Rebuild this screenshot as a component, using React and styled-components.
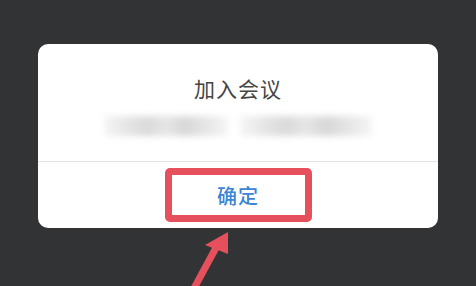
import React from "react";
import styled, { createGlobalStyle } from "styled-components";

const GlobalStyle = createGlobalStyle`
  html, body {
    margin: 0;
    padding: 0;
    background: #323335;
  }
  body {
    font-family: "Noto Sans CJK SC", "Noto Sans", sans-serif;
  }
`;

const Page = styled.div`
  position: relative;
  width: 476px;
  height: 286px;
  overflow: hidden;
  padding-top: 44px;
  box-sizing: border-box;
`;

const Dialog = styled.div`
  width: 400px;
  height: 184px;
  margin: 0 auto;
  background: #fff;
  border-radius: 10px;
  display: flex;
  flex-direction: column;
  overflow: hidden;
`;

const Body = styled.div`
  height: 118px;
  display: flex;
  flex-direction: column;
  align-items: center;
  box-sizing: border-box;
  padding-top: 30px;
  border-bottom: 1.5px solid #e3e3e5;
`;

const Title = styled.div`
  font-size: 21px;
  line-height: 28px;
  color: #454545;
  letter-spacing: 1px;
`;

const Blurred = styled.div`
  margin-top: 14px;
  display: flex;
  gap: 12px;
  filter: blur(3px);
`;

const Smudge = styled.div`
  width: ${(p) => p.w}px;
  height: 20px;
  background: linear-gradient(
    90deg,
    #f6f6f6 0%,
    #e6e6e6 18%,
    #dadada 35%,
    #e6e6e6 50%,
    #d8d8d8 65%,
    #e8e8e8 85%,
    #f6f6f6 100%
  );
`;

const Footer = styled.div`
  flex: 1;
  display: flex;
  justify-content: center;
  padding-top: 6px;
`;

const Confirm = styled.div`
  width: 147px;
  height: 54px;
  box-sizing: border-box;
  border: 7px solid #e6505c;
  border-radius: 5px;
  display: flex;
  align-items: center;
  justify-content: center;
  font-size: 20px;
  font-weight: 500;
  color: #3a85d5;
  letter-spacing: 1px;
`;

const Arrow = styled.svg`
  position: absolute;
  left: 0;
  top: 0;
`;

export default function App() {
  return (
    <>
      <GlobalStyle />
      <Page>
        <Dialog>
          <Body>
            <Title>加入会议</Title>
            <Blurred>
              <Smudge w={124} />
              <Smudge w={132} />
            </Blurred>
          </Body>
          <Footer>
            <Confirm>确定</Confirm>
          </Footer>
        </Dialog>
        <Arrow width="476" height="286" viewBox="0 0 476 286">
          <line x1="192" y1="292" x2="218" y2="244" stroke="#e6505c" strokeWidth="7" />
          <polygon points="228,232 205,245 228,254" fill="#e6505c" />
        </Arrow>
      </Page>
    </>
  );
}
